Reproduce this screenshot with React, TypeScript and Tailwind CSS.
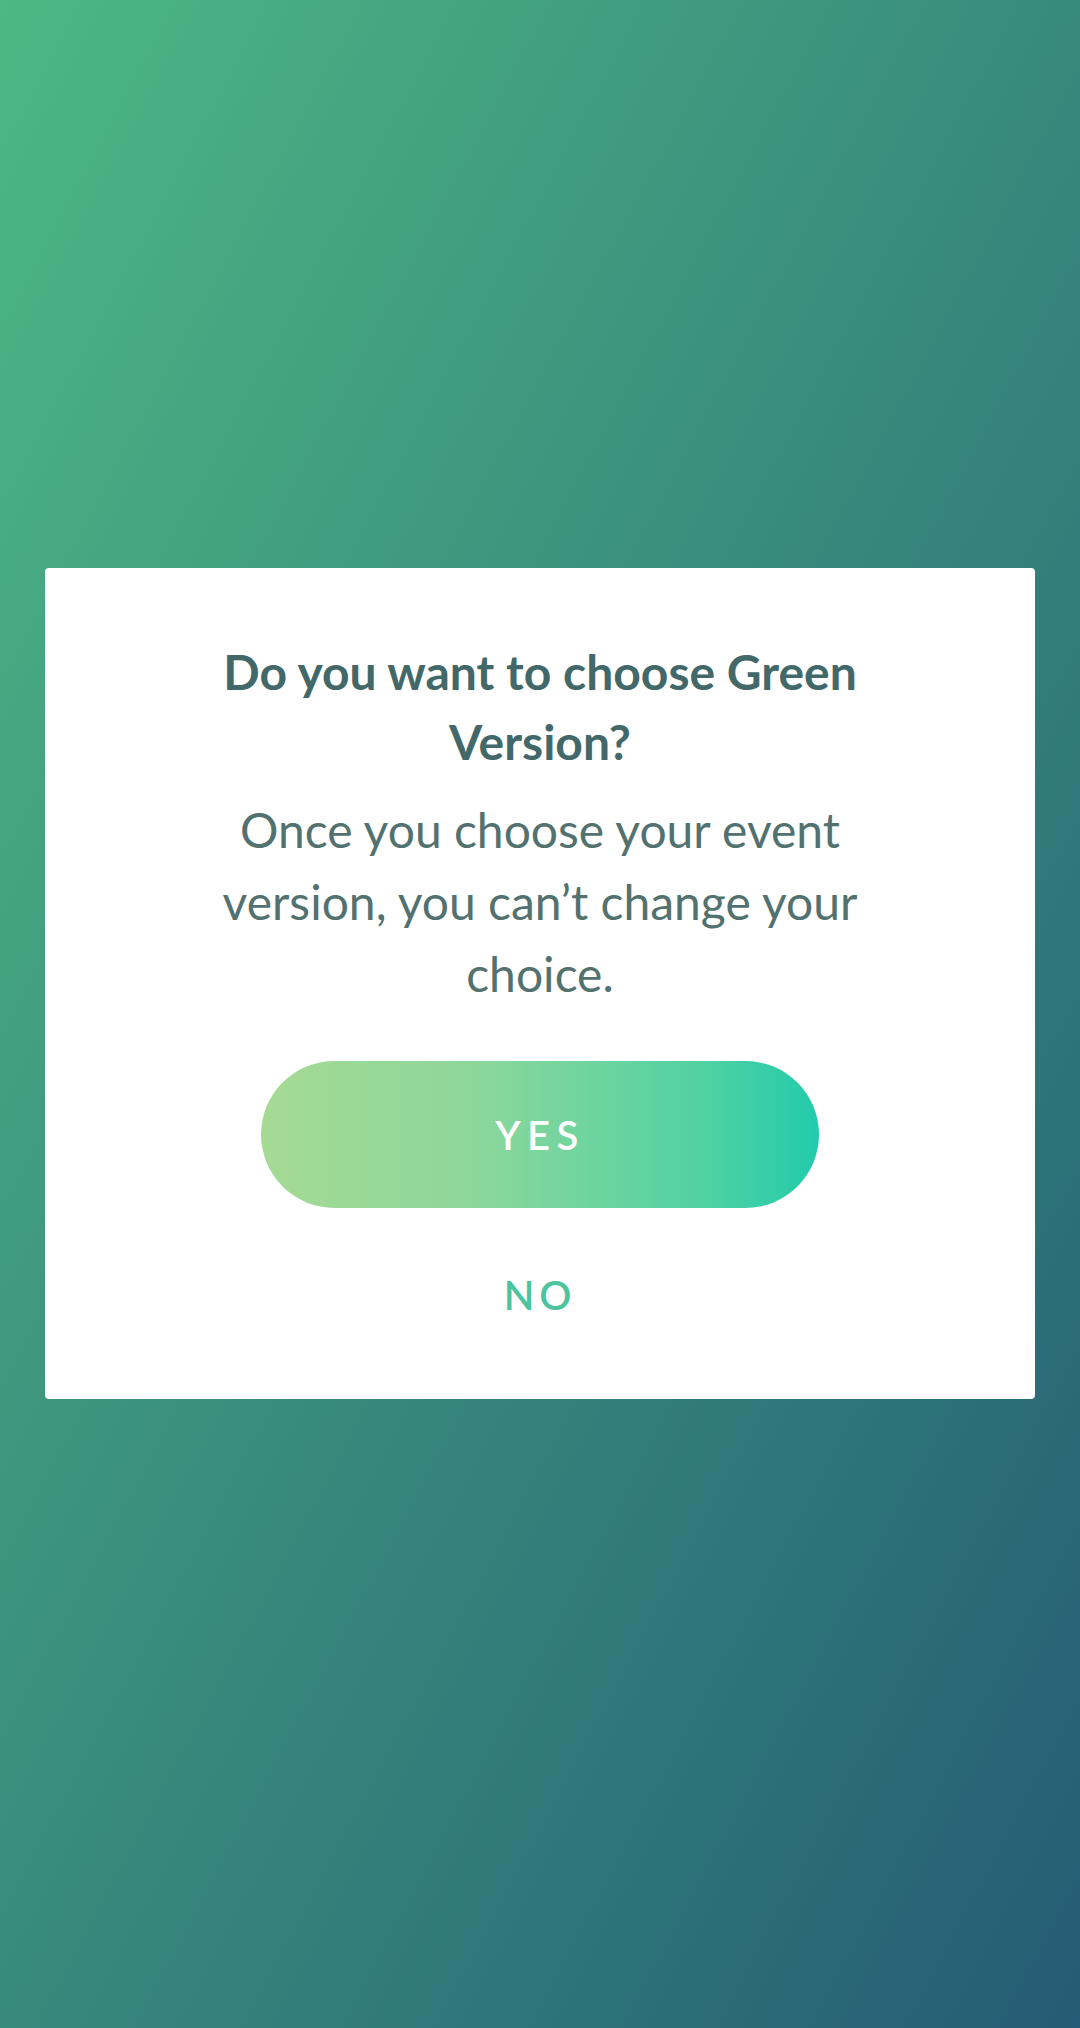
import React from "react";

export default function App() {
  return (
    <div
      className="w-[1080px] h-[2028px] flex flex-col items-center pt-[568px] bg-[linear-gradient(to_bottom_right,#4db884,#388a7c,#245c75)]"
      style={{ fontFamily: "Lato, 'Noto Sans', sans-serif" }}
    >
      <div className="w-[990px] h-[831px] bg-white rounded-[4px] flex flex-col items-center pt-[69px]">
        <h1 className="text-[48px] leading-[70px] font-bold text-[#43686a] text-center whitespace-nowrap">
          Do you want to choose Green
          <br />
          Version?
        </h1>
        <p className="mt-[17px] text-[48px] leading-[72px] text-[#52716f] text-center whitespace-nowrap">
          Once you choose your event
          <br />
          version, you can’t change your
          <br />
          choice.
        </p>
        <button className="mt-[51px] w-[558px] h-[147px] rounded-full bg-[linear-gradient(to_right,#a6da94,#8ad79b_40%,#4fd1a2_80%,#22cbac)] text-white text-[40px] font-semibold tracking-[0.16em] flex items-center justify-center">
          YES
        </button>
        <button className="mt-[57px] h-[60px] text-[40px] font-semibold tracking-[0.12em] text-[#4cc59f] flex items-center justify-center">
          NO
        </button>
      </div>
    </div>
  );
}
